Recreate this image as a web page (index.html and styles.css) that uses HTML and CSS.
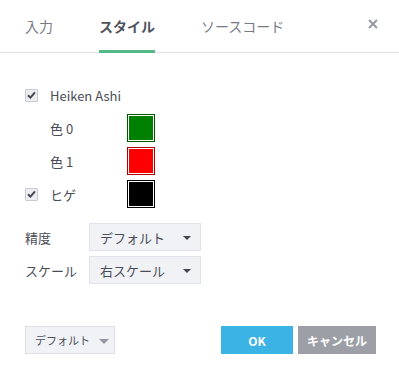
FILE: index.html
```html
<!DOCTYPE html>
<html lang="ja">
<head>
<meta charset="utf-8">
<link rel="stylesheet" href="styles.css">
</head>
<body>
<div class="dialog">
  <div class="header">
    <div class="tabs">
      <span class="tab">入力</span>
      <span class="tab active">スタイル</span>
      <span class="tab">ソースコード</span>
    </div>
    <svg class="close" width="10" height="10" viewBox="0 0 10 10"><path d="M1 1L9 9M9 1L1 9" stroke="#9598a1" stroke-width="2"/></svg>
  </div>
  <div class="content">
    <div class="rows">
      <div class="row">
        <span class="check"><svg width="9" height="8" viewBox="0 0 9 8"><path d="M1 4.2L3.4 6.6L8 1.4" fill="none" stroke="#434651" stroke-width="2"/></svg></span>
        <span class="label">Heiken Ashi</span>
      </div>
      <div class="row sub">
        <span class="label w">色 0</span>
        <span class="swatch sw-green"><i></i></span>
      </div>
      <div class="row sub">
        <span class="label w">色 1</span>
        <span class="swatch sw-red"><i></i></span>
      </div>
      <div class="row">
        <span class="check"><svg width="9" height="8" viewBox="0 0 9 8"><path d="M1 4.2L3.4 6.6L8 1.4" fill="none" stroke="#434651" stroke-width="2"/></svg></span>
        <span class="label w">ヒゲ</span>
        <span class="swatch sw-black"><i></i></span>
      </div>
    </div>
    <div class="selects">
      <div class="srow">
        <span class="slabel">精度</span>
        <div class="select"><span>デフォルト</span><i class="caret"></i></div>
      </div>
      <div class="srow">
        <span class="slabel">スケール</span>
        <div class="select"><span>右スケール</span><i class="caret"></i></div>
      </div>
    </div>
  </div>
  <div class="footer">
    <div class="defbtn"><span>デフォルト</span><i class="caret gray"></i></div>
    <div class="actions">
      <div class="btn ok">OK</div>
      <div class="btn cancel">キャンセル</div>
    </div>
  </div>
</div>
</body>
</html>
```
FILE: styles.css
```css
html, body {
  margin: 0;
  padding: 0;
  background: #fff;
}
body {
  font-family: "Noto Sans CJK JP", "Noto Sans", sans-serif;
  color: #4a4d57;
}
.dialog {
  width: 399px;
  height: 379px;
  display: flex;
  flex-direction: column;
}
.header {
  height: 52px;
  border-bottom: 1px solid #e0e3eb;
  display: flex;
  align-items: stretch;
  justify-content: space-between;
  padding: 0 21px 0 25px;
}
.tabs {
  display: flex;
  gap: 46px;
}
.tab {
  position: relative;
  font-size: 14px;
  line-height: 14px;
  color: #787b86;
  padding-top: 19px;
}
.tab.active {
  color: #50535e;
  font-weight: bold;
}
.tab.active::after {
  content: "";
  position: absolute;
  left: 0;
  right: 0;
  bottom: -1px;
  height: 3px;
  background: #53b987;
}
.close {
  margin-top: 19px;
}
.content {
  padding: 28px 0 0 25px;
}
.rows {
  display: flex;
  flex-direction: column;
  gap: 5px;
}
.row {
  height: 28px;
  display: flex;
  align-items: center;
  font-size: 13px;
}
.row.sub {
  padding-left: 25px;
}
.check {
  width: 11px;
  height: 11px;
  border: 1px solid #c9cbd1;
  background: #eceef2;
  border-radius: 1px;
  display: flex;
  align-items: center;
  justify-content: center;
  margin-right: 12px;
}
.label {
  color: #4a4d57;
}
.label.w {
  width: 77px;
}
.swatch {
  width: 24px;
  height: 24px;
  padding: 1px;
  background: #fff;
  border: 1px solid #000;
  display: block;
}
.swatch i {
  display: block;
  width: 24px;
  height: 24px;
}
.sw-green { border-color: #005400; }
.sw-green i { background: #008000; }
.sw-red { border-color: #b00000; }
.sw-red i { background: #ff0000; }
.sw-black { border-color: #000; }
.sw-black i { background: #000; }
.selects {
  margin-top: 15px;
  display: flex;
  flex-direction: column;
  gap: 5px;
}
.srow {
  display: flex;
  align-items: center;
  font-size: 13px;
}
.slabel {
  width: 64px;
}
.select {
  height: 26px;
  border: 1px solid #e0e3eb;
  background: #f0f2f6;
  display: flex;
  align-items: center;
  justify-content: space-between;
  padding: 0 9px 0 10px;
  width: 91px;
  white-space: nowrap;
}
.caret {
  width: 0;
  height: 0;
  border-left: 4px solid transparent;
  border-right: 4px solid transparent;
  border-top: 4px solid #434651;
  margin-top: 2px;
}
.caret.gray {
  border-left-width: 5px;
  border-right-width: 5px;
  border-top: 5px solid #9598a1;
}
.footer {
  margin-top: auto;
  margin-bottom: 25px;
  padding: 0 23px 0 25px;
  display: flex;
  justify-content: space-between;
  align-items: center;
}
.defbtn {
  height: 26px;
  border: 1px solid #dcdee4;
  background: #f0f2f6;
  display: flex;
  align-items: center;
  padding: 0 8px 0 9px;
  gap: 9px;
  font-size: 11px;
  color: #4a4d57;
  white-space: nowrap;
  width: 71px;
}
.actions {
  display: flex;
  gap: 5px;
}
.btn {
  height: 28px;
  display: flex;
  align-items: center;
  justify-content: center;
  color: #fff;
  font-weight: bold;
  font-size: 12px;
}
.btn.ok {
  width: 72px;
  background: #3bb3e4;
}
.btn.cancel {
  width: 78px;
  background: #9c9fa6;
}
```
